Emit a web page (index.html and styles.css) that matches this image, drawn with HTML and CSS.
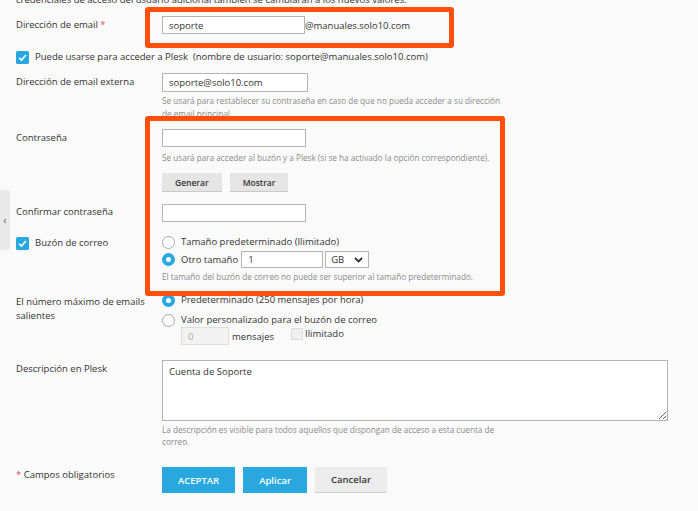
FILE: index.html
```html
<!DOCTYPE html>
<html lang="es">
<head>
    <meta charset="UTF-8">
    <meta name="viewport" content="width=device-width, initial-scale=1.0">
    <title>Buzón de correo</title>
    <link rel="stylesheet" href="styles.css">
</head>
<body>
<div class="page">
    <p class="intro">credenciales de acceso del usuario adicional también se cambiarán a los nuevos valores.</p>

    <div class="row row-email">
        <div class="label">Dirección de email <span class="req">*</span></div>
        <div class="field inline">
            <input class="text w143" type="text" value="soporte">
            <span>@manuales.solo10.com</span>
        </div>
    </div>

    <div class="row-check">
        <span class="check"><svg width="13" height="13" viewBox="0 0 13 13"><rect width="13" height="13" rx="1.5" fill="#29a8e0"/><path d="M3.2 6.9 L5.5 9.1 L9.9 3.9" fill="none" stroke="#fff" stroke-width="1.6"/></svg></span>
        <span>Puede usarse para acceder a Plesk&nbsp; (nombre de usuario: soporte@manuales.solo10.com)</span>
    </div>

    <div class="row row-ext">
        <div class="label">Dirección de email externa</div>
        <div class="field">
            <input class="text w146 h19" type="text" value="soporte@solo10.com">
            <p class="hint hint-ext">Se usará para restablecer su contraseña en caso de que no pueda acceder a su dirección de email principal.</p>
        </div>
    </div>

    <div class="row row-pass">
        <div class="label">Contraseña</div>
        <div class="field">
            <input class="text w144" type="password">
            <p class="hint hint-pass">Se usará para acceder al buzón y a Plesk (si se ha activado la opción correspondiente).</p>
            <div class="btns small">
                <button class="btn gray">Generar</button>
                <button class="btn gray">Mostrar</button>
            </div>
        </div>
    </div>

    <div class="row row-confirm">
        <div class="label">Confirmar contraseña</div>
        <div class="field">
            <input class="text w144" type="password">
        </div>
    </div>

    <div class="row row-mailbox">
        <div class="label check-label">
            <span class="check"><svg width="13" height="13" viewBox="0 0 13 13"><rect width="13" height="13" rx="1.5" fill="#29a8e0"/><path d="M3.2 6.9 L5.5 9.1 L9.9 3.9" fill="none" stroke="#fff" stroke-width="1.6"/></svg></span>
            <span>Buzón de correo</span>
        </div>
        <div class="field">
            <div class="opt"><span class="radio"></span>Tamaño predeterminado (Ilimitado)</div>
            <div class="opt opt-size">
                <span class="radio on"></span>Otro tamaño
                <input class="text size" type="text" value="1">
                <span class="select">GB<svg width="9" height="6" viewBox="0 0 9 6"><path d="M1 1 L4.5 4.5 L8 1" fill="none" stroke="#333" stroke-width="1.8"/></svg></span>
            </div>
            <p class="hint hint-size">El tamaño del buzón de correo no puede ser superior al tamaño predeterminado.</p>
        </div>
    </div>

    <div class="row row-out">
        <div class="label label-wrap">El número máximo de emails salientes</div>
        <div class="field">
            <div class="opt"><span class="radio on"></span>Predeterminado (250 mensajes por hora)</div>
            <div class="opt opt-custom"><span class="radio"></span>Valor personalizado para el buzón de correo</div>
            <div class="limit">
                <input class="text small-num" type="text" value="0" disabled>
                <span class="unit">mensajes</span>
                <span class="box-off"></span>
                <span class="unlimited">Ilimitado</span>
            </div>
        </div>
    </div>

    <div class="row row-desc">
        <div class="label">Descripción en Plesk</div>
        <div class="field">
            <textarea class="desc">Cuenta de Soporte</textarea>
            <p class="hint hint-desc">La descripción es visible para todos aquellos que dispongan de acceso a esta cuenta de correo.</p>
        </div>
    </div>

    <div class="row row-footer">
        <div class="label"><span class="req">*</span> Campos obligatorios</div>
        <div class="btns">
            <button class="btn blue">ACEPTAR</button>
            <button class="btn blue">Aplicar</button>
            <button class="btn light">Cancelar</button>
        </div>
    </div>

    <!-- highlight frames drawn over the form -->
    <div class="mark mark-email"></div>
    <div class="mark mark-pass"></div>

    <div class="side-tab">&#8249;</div>
</div>
</body>
</html>
```

FILE: styles.css
```css
* {
    box-sizing: border-box;
}

html, body {
    margin: 0;
    padding: 0;
}

body {
    background-color: #fafafa;
    font-family: "Open Sans", sans-serif;
    font-size: 9.5px;
    color: #333;
    overflow: hidden;
}

.page {
    position: relative;
    display: flow-root;
    height: 511px;
    padding-left: 16px;
}

.intro {
    margin: -7px 0 0;
    line-height: 14px;
}

.row {
    display: grid;
    grid-template-columns: 146px 1fr;
    align-items: start;
}

.label {
    line-height: 14px;
    padding-right: 8px;
}

.req {
    color: #d9534f;
}

.inline {
    display: flex;
    align-items: center;
}

.text {
    font-family: inherit;
    font-size: 9.5px;
    color: #333;
    height: 18px;
    padding: 0 6px;
    border: 1px solid #b4b4b4;
    background-color: #fff;
    border-radius: 0;
    margin: 0;
    outline: none;
}

.w143 { width: 143px; }
.w144 { width: 144px; }
.w146 { width: 146px; }
.h19 { height: 19px; }

.hint {
    margin: 0;
    font-size: 8.2px;
    color: #8a8a8a;
    line-height: 13px;
    max-width: 340px;
}

/* rows */
.row-email {
    margin-top: 9px;
}

.row-email .label {
    padding-top: 2px;
}

.row-check {
    margin-top: 16px;
    height: 14px;
    display: flex;
    align-items: center;
    gap: 6px;
    line-height: 14px;
}

.check {
    display: inline-flex;
    width: 13px;
    height: 13px;
}

.row-ext {
    margin-top: 9px;
}

.row-ext .label {
    padding-top: 2px;
}

.hint-ext {
    margin-top: 1.5px;
}

.row-pass {
    margin-top: 9.5px;
}

.row-pass .label {
    padding-top: 2px;
}

.hint-pass {
    margin-top: 3.5px;
}

.btns {
    display: flex;
    gap: 8px;
}

.btns.small {
    margin-top: 9.5px;
}

.btn {
    font-family: inherit;
    font-weight: 600;
    border: none;
    cursor: pointer;
    margin: 0;
}

.btn.gray {
    height: 19px;
    padding: 0 13px;
    font-size: 8.5px;
    background-color: #e5e5e5;
    border-bottom: 1px solid #c9c9c9;
    color: #333;
}

.row-confirm {
    margin-top: 12px;
}

.row-confirm .label {
    padding-top: 1px;
}

.row-mailbox {
    margin-top: 13px;
}

.check-label {
    display: flex;
    align-items: center;
    gap: 6px;
    padding-top: 1px;
}

.opt {
    display: flex;
    align-items: center;
    height: 14px;
    line-height: 14px;
}

.radio {
    width: 13px;
    height: 13px;
    border-radius: 50%;
    border: 1px solid #a9a9a9;
    background-color: #fff;
    margin-right: 6px;
    flex: none;
}

.radio.on {
    border: 4px solid #29a8e0;
}

.opt-size {
    margin-top: 2px;
    height: 17px;
}

.text.size {
    width: 82px;
    height: 17px;
    margin-left: 3px;
}

.select {
    display: flex;
    align-items: center;
    justify-content: space-between;
    width: 44px;
    height: 17px;
    margin-left: 2px;
    padding: 0 5px 0 5px;
    border: 1px solid #b4b4b4;
    background-color: #fff;
}

.hint-size {
    margin-top: 1.5px;
}

.row-out {
    margin-top: 10.5px;
}

.label-wrap {
    padding-top: 2px;
    padding-right: 12px;
}

.opt-custom {
    margin-top: 6px;
}

.limit {
    display: flex;
    align-items: flex-start;
    padding-left: 19px;
}

.text.small-num {
    width: 48px;
    height: 18px;
    background-color: #f2f2f2;
    border-color: #dedede;
    color: #aaa;
}

.unit {
    padding-top: 3px;
    margin-left: 3px;
    line-height: 14px;
}

.box-off {
    width: 12px;
    height: 12px;
    margin: 1px 2px 0 17px;
    background-color: #f0f0f0;
    border: 1px solid #dcdcdc;
}

.unlimited {
    line-height: 14px;
}

.row-desc {
    margin-top: 15px;
}

.row-desc .label {
    padding-top: 2px;
}

.desc {
    display: block;
    width: 506px;
    height: 61px;
    margin: 0;
    padding: 4px 6px;
    font-family: inherit;
    font-size: 9.5px;
    line-height: 14px;
    color: #333;
    border: 1px solid #b4b4b4;
    background-color: #fff;
    border-radius: 0;
    outline: none;
}

.hint-desc {
    margin-top: 3px;
    line-height: 12px;
}

.row-footer {
    margin-top: 19px;
}

.row-footer .label {
    padding-top: 1px;
}

.btn.blue,
.btn.light {
    height: 26px;
    padding: 0 16px;
    font-size: 9.5px;
}

.btn.blue {
    background-color: #29a8df;
    color: #fff;
}

.btn.light {
    background-color: #ececec;
    border-bottom: 1px solid #cfcfcf;
    color: #333;
}

/* orange highlight frames */
.mark {
    position: absolute;
    border: 5px solid #ff4f0a;
    border-radius: 3px;
}

.mark-email {
    left: 145px;
    top: 7px;
    width: 309px;
    height: 41px;
}

.mark-pass {
    left: 145px;
    top: 116px;
    width: 360px;
    height: 180px;
}

.side-tab {
    position: absolute;
    left: 0;
    top: 190px;
    width: 10px;
    height: 60px;
    background-color: #e9e9e9;
    border-radius: 0 3px 3px 0;
    color: #555;
    font-size: 11px;
    line-height: 60px;
    text-align: center;
}
```
